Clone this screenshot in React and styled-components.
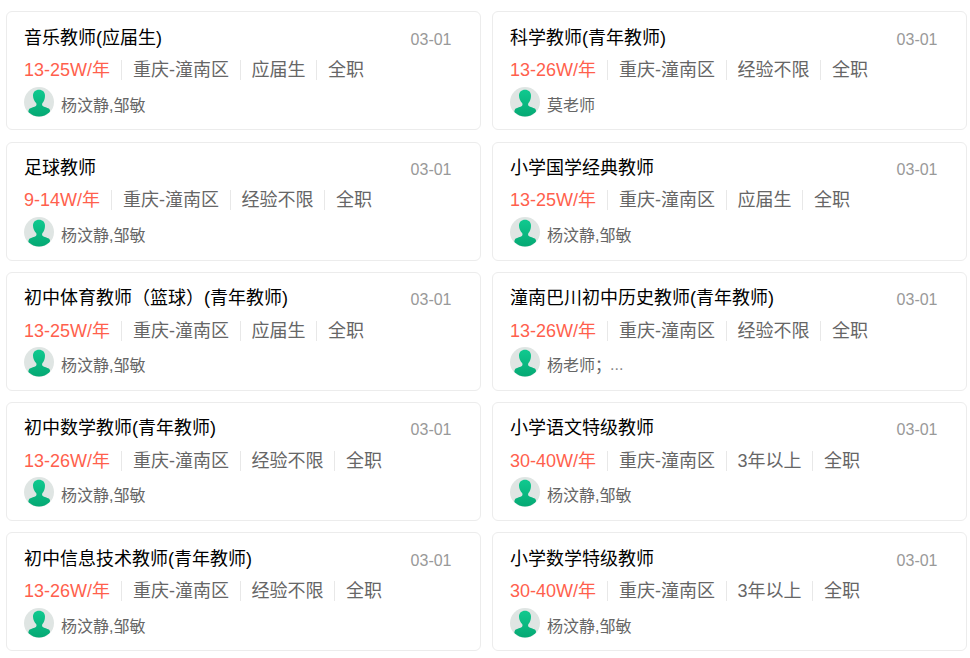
import React from 'react'
import styled, { createGlobalStyle } from 'styled-components'

const jobs = [
  { title: '音乐教师(应届生)', pay: '13-25W/年', exp: '应届生', people: '杨汶静,邹敏' },
  { title: '科学教师(青年教师)', pay: '13-26W/年', exp: '经验不限', people: '莫老师' },
  { title: '足球教师', pay: '9-14W/年', exp: '经验不限', people: '杨汶静,邹敏' },
  { title: '小学国学经典教师', pay: '13-25W/年', exp: '应届生', people: '杨汶静,邹敏' },
  { title: '初中体育教师（篮球）(青年教师)', pay: '13-25W/年', exp: '应届生', people: '杨汶静,邹敏' },
  { title: '潼南巴川初中历史教师(青年教师)', pay: '13-26W/年', exp: '经验不限', people: '杨老师；', more: true },
  { title: '初中数学教师(青年教师)', pay: '13-26W/年', exp: '经验不限', people: '杨汶静,邹敏' },
  { title: '小学语文特级教师', pay: '30-40W/年', exp: '3年以上', people: '杨汶静,邹敏' },
  { title: '初中信息技术教师(青年教师)', pay: '13-26W/年', exp: '经验不限', people: '杨汶静,邹敏' },
  { title: '小学数学特级教师', pay: '30-40W/年', exp: '3年以上', people: '杨汶静,邹敏' },
]

const Avatar = () => (
  <AvatarSvg viewBox="0 0 30 30">
    <defs>
      <linearGradient id="person" x1="0" y1="0" x2="0" y2="1">
        <stop offset="0" stopColor="#10c98f" />
        <stop offset="1" stopColor="#05a873" />
      </linearGradient>
      <clipPath id="round">
        <circle cx="15" cy="15" r="14.6" />
      </clipPath>
    </defs>
    <circle cx="15" cy="15" r="15" fill="#dfe5e3" />
    <path
      clipPath="url(#round)"
      fill="url(#person)"
      d="M15 2.8c3.6 0 6 2.3 6 5.9 0 3-1.1 5.7-2.5 7.3-.6.7-.6 2.3.2 2.9 1.5 1 4.6 1.6 6.1 2.7 1.1.8 1.7 2.6 2 8.4H3.8c.3-5.8.9-7.600 2-8.400 1.500-1.100 4.600-1.700 6.100-2.700.8-.6.8-2.200.2-2.900C10.700 14.400 9 11.700 9 8.700c0-3.600 2.400-5.900 6-5.900z"
    />
  </AvatarSvg>
)

const App = () => (
  <>
    <GlobalStyle />
    <Grid>
      {jobs.map((job) => (
        <Card key={job.title}>
          <TitleRow>
            <Title>{job.title}</Title>
            <DateText>03-01</DateText>
          </TitleRow>
          <Meta>
            <Pay>{job.pay}</Pay>
            <MetaItem>重庆-潼南区</MetaItem>
            <MetaItem>{job.exp}</MetaItem>
            <MetaItem>全职</MetaItem>
          </Meta>
          <People>
            <Avatar />
            <Names>{job.people}</Names>
            {job.more && <More>...</More>}
          </People>
        </Card>
      ))}
    </Grid>
  </>
)

export default App

const GlobalStyle = createGlobalStyle`
  body {
    margin: 0;
    background: #fff;
    font-family: "Liberation Sans", "Noto Sans CJK SC", sans-serif;
  }
`

const Grid = styled.div`
  display: grid;
  grid-template-columns: 474.5px 474.5px;
  column-gap: 11.5px;
  row-gap: 11.2px;
  padding: 11.49px 0 0 6px;
`

const Card = styled.div`
  box-sizing: border-box;
  height: 119px;
  padding: 12.3px 17px 0;
  border: 1px solid #ececec;
  border-radius: 6px;
`

const TitleRow = styled.div`
  display: flex;
  justify-content: space-between;
  align-items: center;
  height: 26px;
`

const Title = styled.div`
  font-size: 18px;
  line-height: 26px;
  color: #000;
`

const DateText = styled.div`
  margin: 4px 11px 0 0;
  font-size: 16px;
  color: #999;
`

const Meta = styled.div`
  display: flex;
  align-items: center;
  height: 26px;
  margin-top: 6.5px;
  font-size: 18px;
  line-height: 20px;
  color: #666;
`

const Pay = styled.span`
  color: #ff5f4d;
  padding-right: 11px;
`

const MetaItem = styled.span`
  padding: 0 10.5px 0 11px;
  border-left: 1px solid #e8e8e8;
`

const People = styled.div`
  display: flex;
  align-items: center;
  margin-top: 3.5px;
`

const AvatarSvg = styled.svg`
  width: 30px;
  height: 30px;
  flex: none;
`

const Names = styled.span`
  margin: 4px 0 0 7px;
  font-size: 16px;
  color: #666;
`

const More = styled.span`
  margin: 5px 0 0 -1px;
  font-size: 16px;
  color: #888;
`
